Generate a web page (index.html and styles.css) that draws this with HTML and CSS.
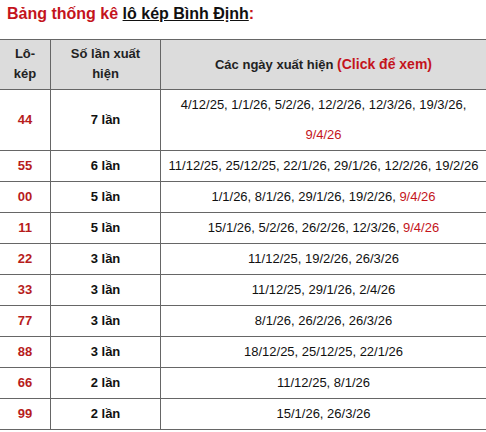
FILE: index.html
```html
<!DOCTYPE html>
<html lang="vi">
<head>
<meta charset="utf-8">
<link rel="stylesheet" href="styles.css">
</head>
<body>
<h2 class="title">Bảng thống kê <span class="title-link">lô kép Bình Định</span>:</h2>
<table class="stats">
  <colgroup>
    <col class="c1"><col class="c2"><col class="c3">
  </colgroup>
  <thead>
    <tr>
      <th>Lô-<br>kép</th>
      <th>Số lần xuất<br>hiện</th>
      <th>Các ngày xuất hiện <span class="click">(Click để xem)</span></th>
    </tr>
  </thead>
  <tbody>
    <tr><td class="num">44</td><td class="cnt">7 lần</td><td class="dates">4/12/25, 1/1/26, 5/2/26, 12/2/26, 12/3/26, 19/3/26,<br><span class="hl">9/4/26</span></td></tr>
    <tr><td class="num">55</td><td class="cnt">6 lần</td><td class="dates">11/12/25, 25/12/25, 22/1/26, 29/1/26, 12/2/26, 19/2/26</td></tr>
    <tr><td class="num">00</td><td class="cnt">5 lần</td><td class="dates">1/1/26, 8/1/26, 29/1/26, 19/2/26, <span class="hl">9/4/26</span></td></tr>
    <tr><td class="num">11</td><td class="cnt">5 lần</td><td class="dates">15/1/26, 5/2/26, 26/2/26, 12/3/26, <span class="hl">9/4/26</span></td></tr>
    <tr><td class="num">22</td><td class="cnt">3 lần</td><td class="dates">11/12/25, 19/2/26, 26/3/26</td></tr>
    <tr><td class="num">33</td><td class="cnt">3 lần</td><td class="dates">11/12/25, 29/1/26, 2/4/26</td></tr>
    <tr><td class="num">77</td><td class="cnt">3 lần</td><td class="dates">8/1/26, 26/2/26, 26/3/26</td></tr>
    <tr><td class="num">88</td><td class="cnt">3 lần</td><td class="dates">18/12/25, 25/12/25, 22/1/26</td></tr>
    <tr><td class="num">66</td><td class="cnt">2 lần</td><td class="dates">11/12/25, 8/1/26</td></tr>
    <tr><td class="num">99</td><td class="cnt">2 lần</td><td class="dates">15/1/26, 26/3/26</td></tr>
  </tbody>
</table>
</body>
</html>
```
FILE: styles.css
```css
html, body {
  margin: 0;
  padding: 0;
  background: #fff;
}
body {
  font-family: "Liberation Sans", Arial, sans-serif;
  color: #111;
  overflow: hidden;
}
.title {
  margin: 4px 0 15px 7px;
  font-size: 16px;
  line-height: 20px;
  font-weight: bold;
  color: #c4141c;
}
.title-link {
  color: #111;
  text-decoration: underline;
}
.stats {
  border-collapse: collapse;
  width: 487px;
  margin-left: -1px;
  table-layout: fixed;
  font-size: 13px;
}
.c1 { width: 51px; }
.c2 { width: 110px; }
.c3 { width: 326px; }
.stats th, .stats td {
  border: 1px solid #666;
  text-align: center;
  vertical-align: middle;
}
.stats th {
  background: #dcdcdc;
  font-weight: bold;
  line-height: 20px;
  padding: 4px 2px 5px;
  color: #222;
}
.stats td {
  line-height: 30px;
  padding: 0 2px;
}
.click {
  color: #c4141c;
  font-size: 14px;
  font-weight: bold;
}
.hl {
  color: #c4141c;
}
.num {
  color: #b71c1c;
  font-weight: bold;
}
.cnt {
  font-weight: bold;
  color: #111;
}
.dates {
  color: #111;
}
```
